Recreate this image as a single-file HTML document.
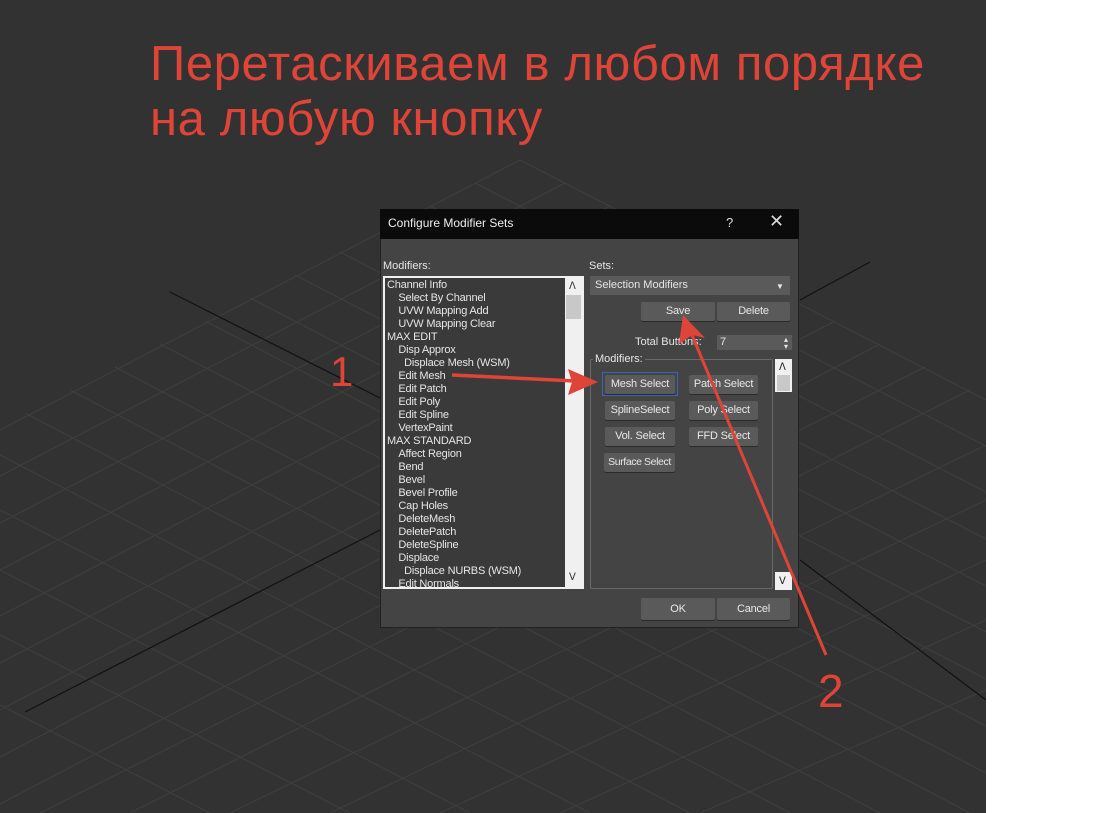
<!DOCTYPE html>
<html><head><meta charset="utf-8"><style>
*{margin:0;padding:0;box-sizing:border-box}
body{width:1102px;height:813px;overflow:hidden;background:#323232;position:relative;font-family:"Liberation Sans","DejaVu Sans",sans-serif}
.abs{position:absolute}
.h{color:#df4439;font-size:49px;line-height:55px;left:150px;top:37px;white-space:nowrap;letter-spacing:0.6px}
.t{font-size:11px;color:#e6e6e6;white-space:nowrap;line-height:13px}
.btn{position:absolute;background:#5a5a5a;border-radius:2px;color:#e8e8e8;font-size:11px;text-align:center;line-height:19px;height:19px;box-shadow:0 1px 0 #2a2a2a;white-space:nowrap;letter-spacing:-0.2px}
</style></head><body>
<svg class="abs" style="left:0;top:0" width="986" height="813">
<g stroke="#3f3f3f" stroke-width="1">
<line x1="520" y1="160" x2="0" y2="430"/><line x1="520" y1="160" x2="986" y2="400"/>
<line x1="565" y1="183" x2="0" y2="476"/><line x1="610" y1="206" x2="0" y2="523"/><line x1="655" y1="229" x2="0" y2="570"/><line x1="700" y1="252" x2="0" y2="616"/><line x1="745" y1="275" x2="0" y2="663"/><line x1="790" y1="298" x2="0" y2="710"/><line x1="835" y1="321" x2="0" y2="757"/><line x1="880" y1="344" x2="0" y2="804"/><line x1="925" y1="367" x2="40" y2="813"/><line x1="970" y1="390" x2="130" y2="813"/><line x1="986" y1="445" x2="230" y2="813"/><line x1="986" y1="500" x2="330" y2="813"/><line x1="986" y1="560" x2="440" y2="813"/><line x1="986" y1="620" x2="560" y2="813"/><line x1="986" y1="690" x2="700" y2="813"/>
<line x1="475" y1="183" x2="986" y2="446"/><line x1="430" y1="206" x2="986" y2="492"/><line x1="385" y1="229" x2="986" y2="539"/><line x1="340" y1="252" x2="986" y2="586"/><line x1="295" y1="275" x2="986" y2="632"/><line x1="250" y1="298" x2="986" y2="679"/><line x1="205" y1="321" x2="986" y2="726"/><line x1="160" y1="344" x2="986" y2="773"/><line x1="115" y1="367" x2="970" y2="813"/><line x1="70" y1="390" x2="880" y2="813"/><line x1="25" y1="413" x2="790" y2="813"/><line x1="0" y1="455" x2="690" y2="813"/><line x1="0" y1="510" x2="590" y2="813"/><line x1="0" y1="570" x2="470" y2="813"/><line x1="0" y1="635" x2="350" y2="813"/><line x1="0" y1="705" x2="210" y2="813"/>
</g>
<g stroke="#111" stroke-width="1.2">
<line x1="170" y1="292" x2="380" y2="398"/><line x1="25" y1="712" x2="380" y2="530"/>
<line x1="800" y1="300" x2="870" y2="262"/><line x1="800" y1="560" x2="986" y2="700"/>
</g>
</svg>
<div class="abs" style="left:986px;top:0;width:116px;height:813px;background:#fff"></div>
<div class="abs h">Перетаскиваем в любом порядке<br>на любую кнопку</div>

<div class="abs" style="left:380px;top:209px;width:419px;height:419px;background:#444;border:1px solid #222"></div>
<div class="abs" style="left:380px;top:209px;width:419px;height:30px;background:#0b0b0b"></div>
<div class="abs t" style="left:388px;top:217px;font-size:12px;color:#eee">Configure Modifier Sets</div>
<div class="abs t" style="left:726px;top:216px;font-size:13px;color:#ddd">?</div>
<div class="abs t" style="left:769px;top:215px;font-size:18px;color:#ddd">✕</div>

<div class="abs t" style="left:383px;top:260px">Modifiers:</div>
<div class="abs" style="left:383px;top:276px;width:201px;height:313px;background:#3a3a3a;border:2px solid #f0f0f0;overflow:hidden">
<div class="t" style="padding:1px 0 0 2px;letter-spacing:-0.2px">Channel Info<br>&nbsp;&nbsp;&nbsp;&nbsp;Select By Channel<br>&nbsp;&nbsp;&nbsp;&nbsp;UVW Mapping Add<br>&nbsp;&nbsp;&nbsp;&nbsp;UVW Mapping Clear<br>MAX EDIT<br>&nbsp;&nbsp;&nbsp;&nbsp;Disp Approx<br>&nbsp;&nbsp;&nbsp;&nbsp;&nbsp;&nbsp;Displace Mesh (WSM)<br>&nbsp;&nbsp;&nbsp;&nbsp;Edit Mesh<br>&nbsp;&nbsp;&nbsp;&nbsp;Edit Patch<br>&nbsp;&nbsp;&nbsp;&nbsp;Edit Poly<br>&nbsp;&nbsp;&nbsp;&nbsp;Edit Spline<br>&nbsp;&nbsp;&nbsp;&nbsp;VertexPaint<br>MAX STANDARD<br>&nbsp;&nbsp;&nbsp;&nbsp;Affect Region<br>&nbsp;&nbsp;&nbsp;&nbsp;Bend<br>&nbsp;&nbsp;&nbsp;&nbsp;Bevel<br>&nbsp;&nbsp;&nbsp;&nbsp;Bevel Profile<br>&nbsp;&nbsp;&nbsp;&nbsp;Cap Holes<br>&nbsp;&nbsp;&nbsp;&nbsp;DeleteMesh<br>&nbsp;&nbsp;&nbsp;&nbsp;DeletePatch<br>&nbsp;&nbsp;&nbsp;&nbsp;DeleteSpline<br>&nbsp;&nbsp;&nbsp;&nbsp;Displace<br>&nbsp;&nbsp;&nbsp;&nbsp;&nbsp;&nbsp;Displace NURBS (WSM)<br>&nbsp;&nbsp;&nbsp;&nbsp;Edit Normals</div>
<div class="abs" style="left:180px;top:0;width:17px;height:309px;background:#f0f0f0"></div>
<div class="abs" style="left:181px;top:17px;width:15px;height:24px;background:#c8c8c8"></div>
<div class="abs t" style="left:184px;top:2px;color:#333;font-size:10px">ᐱ</div>
<div class="abs t" style="left:184px;top:293px;color:#333;font-size:10px">ᐯ</div>
</div>

<div class="abs t" style="left:589px;top:260px">Sets:</div>
<div class="abs" style="left:590px;top:276px;width:200px;height:19px;background:#5a5a5a"></div>
<div class="abs t" style="left:595px;top:279px">Selection Modifiers</div>
<div class="abs t" style="left:776px;top:280px;font-size:8px">▼</div>
<div class="btn" style="left:641px;top:302px;width:74px">Save</div>
<div class="btn" style="left:717px;top:302px;width:73px">Delete</div>
<div class="abs t" style="left:635px;top:336px">Total Buttons:</div>
<div class="abs" style="left:717px;top:335px;width:75px;height:15px;background:#5a5a5a"></div>
<div class="abs t" style="left:720px;top:336px">7</div>
<div class="abs t" style="left:784px;top:336px;font-size:8px;line-height:7px">▴<br>▾</div>

<div class="abs" style="left:590px;top:359px;width:183px;height:230px;border:1px solid #6a6a6a;border-radius:2px"></div>
<div class="abs t" style="left:593px;top:353px;background:#444;padding:0 2px">Modifiers:</div>
<div class="abs" style="left:775px;top:359px;width:17px;height:33px;background:#f0f0f0"></div>
<div class="abs" style="left:777px;top:375px;width:13px;height:16px;background:#c8c8c8"></div>
<div class="abs t" style="left:779px;top:361px;color:#222;font-size:10px">ᐱ</div>
<div class="abs" style="left:775px;top:572px;width:17px;height:18px;background:#f0f0f0"></div>
<div class="abs t" style="left:779px;top:575px;color:#222;font-size:10px">ᐯ</div>

<div class="abs" style="left:602px;top:372px;width:76px;height:24px;border:1px solid #3a62b8"></div>
<div class="btn" style="left:605px;top:375px;width:70px">Mesh Select</div>
<div class="btn" style="left:689px;top:375px;width:69px">Patch Select</div>
<div class="btn" style="left:605px;top:401px;width:70px">SplineSelect</div>
<div class="btn" style="left:689px;top:401px;width:69px">Poly Select</div>
<div class="btn" style="left:605px;top:427px;width:70px">Vol. Select</div>
<div class="btn" style="left:689px;top:427px;width:69px">FFD Select</div>
<div class="btn" style="left:604px;top:453px;width:71px;font-size:10.5px;letter-spacing:-0.4px">Surface Select</div>

<div class="btn" style="left:641px;top:598px;width:74px;height:22px;line-height:22px">OK</div>
<div class="btn" style="left:717px;top:598px;width:73px;height:22px;line-height:22px">Cancel</div>

<svg class="abs" style="left:0;top:0" width="986" height="813">
<g fill="#df4439" stroke="#df4439">
<line x1="452" y1="375" x2="575" y2="381" stroke-width="3.5"/>
<polygon points="598,382 568,369 572,382 568,395" stroke="none"/>
<line x1="826" y1="655" x2="692" y2="335" stroke-width="3"/>
<polygon points="683,315 679,344 692,335 705,338" stroke="none"/>
</g>
<text x="330" y="386" fill="#df4439" font-size="42" font-family="Liberation Sans">1</text>
<text x="818" y="707" fill="#df4439" font-size="46" font-family="Liberation Sans">2</text>
</svg>
</body></html>
